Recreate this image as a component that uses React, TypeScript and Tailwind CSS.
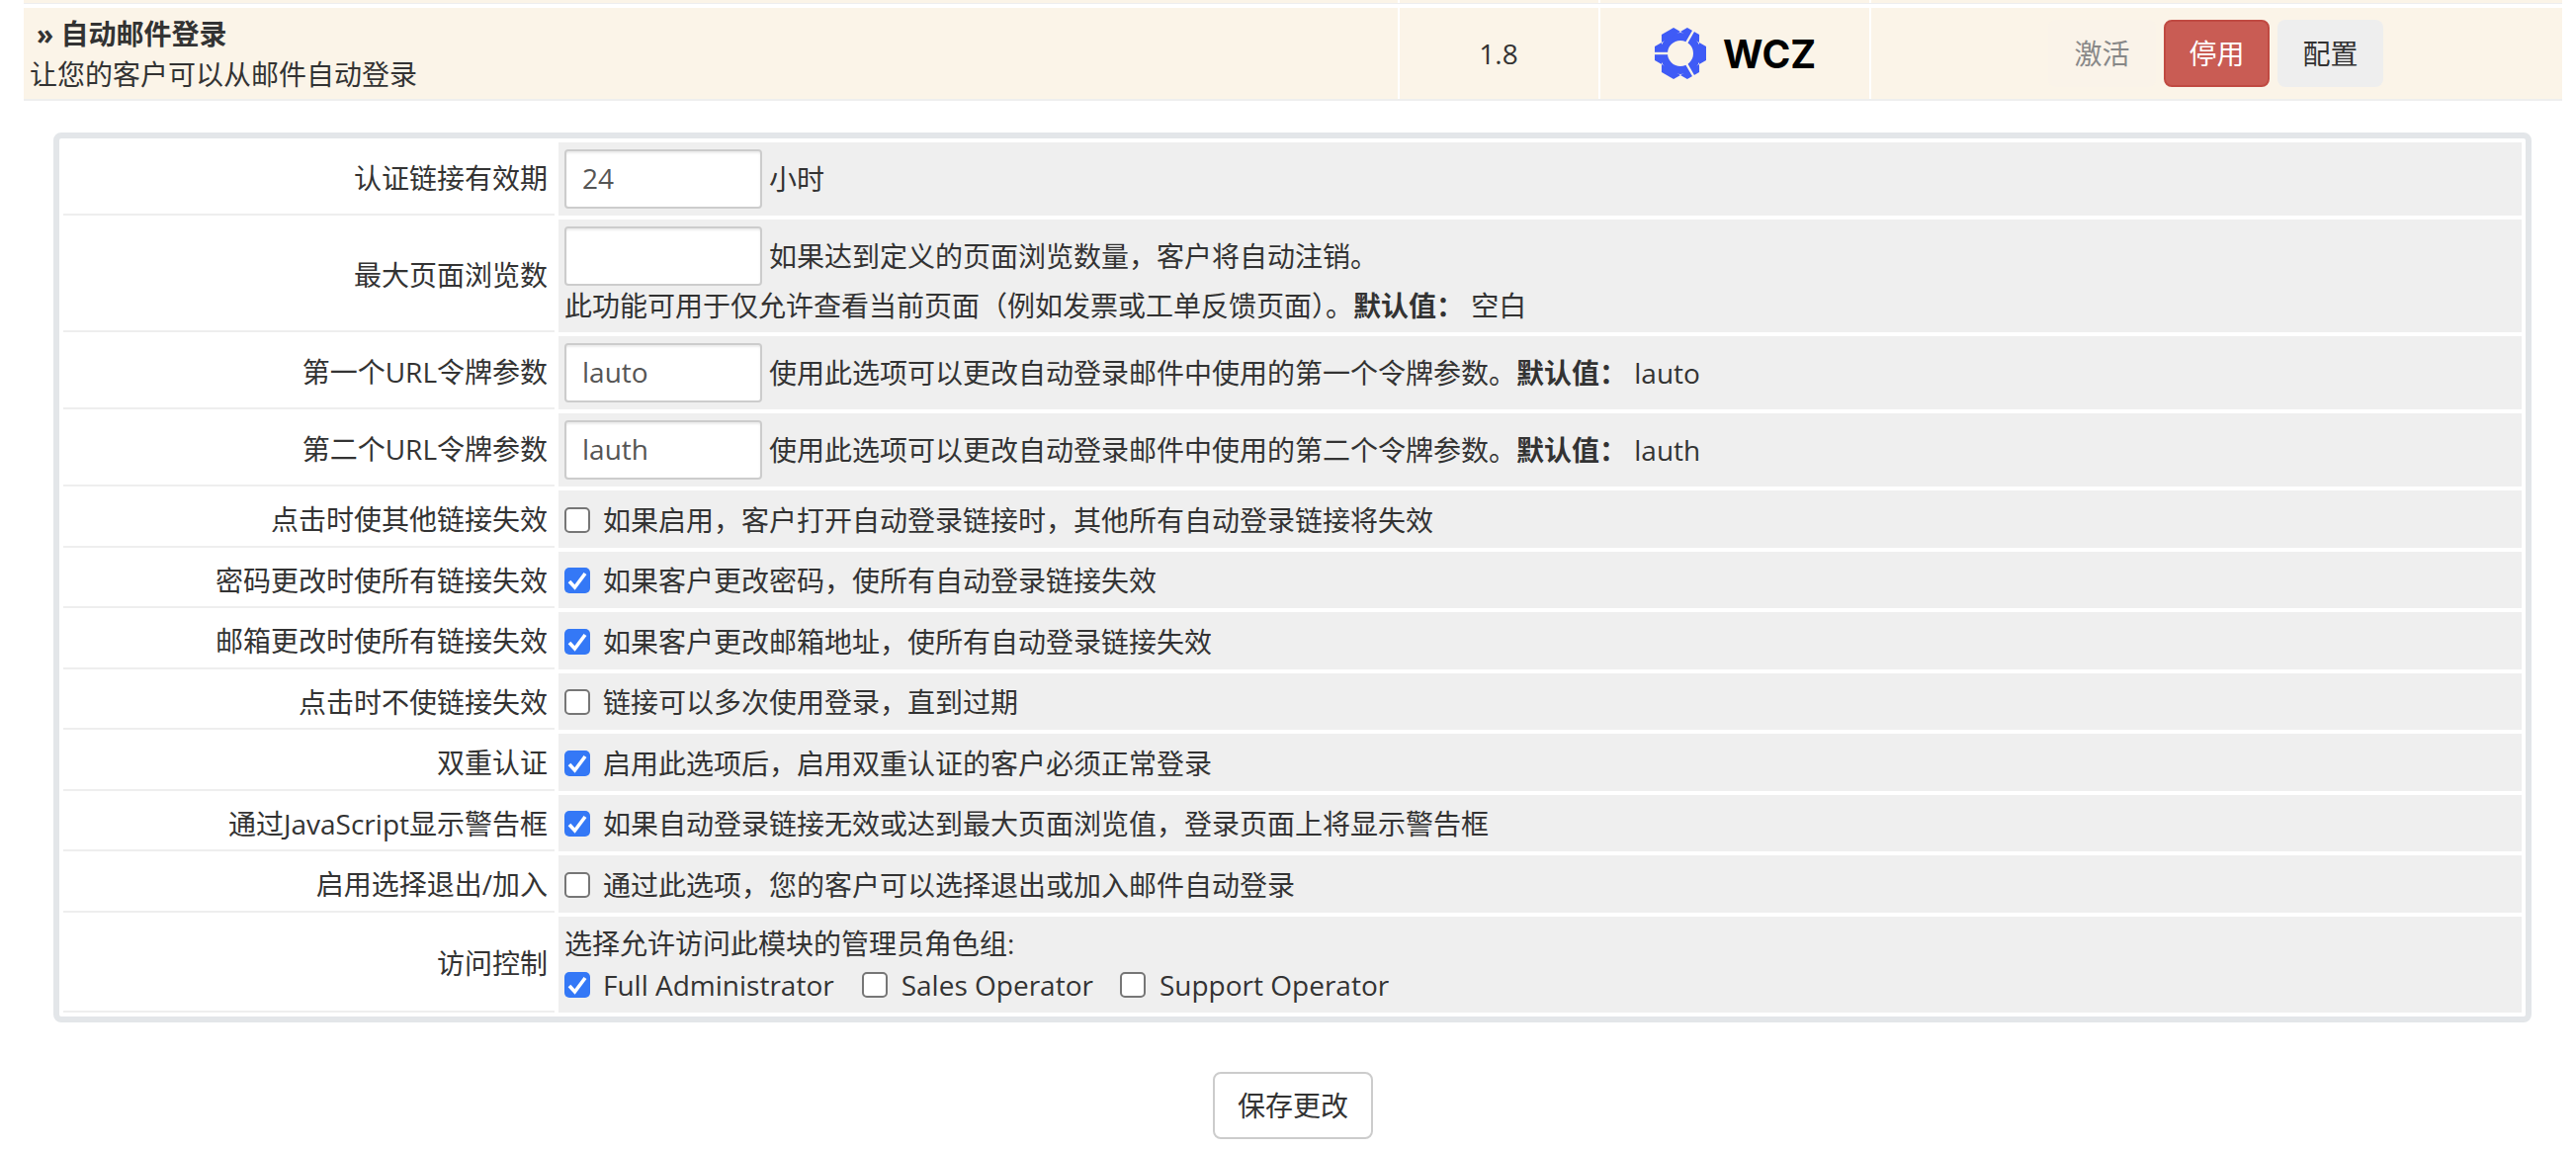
import React from 'react';

const cjk = "font-['Open_Sans','Noto_Sans_CJK_SC',sans-serif]";

const Box = ({ on }: { on?: boolean }) => (
  <span
    className={`inline-flex w-[26px] h-[26px] shrink-0 items-center justify-center rounded-[5px] ${
      on ? 'bg-[#3478f6]' : 'bg-white border-2 border-[#767676]'
    }`}
  >
    {on && (
      <svg width="26" height="26" viewBox="0 0 26 26">
        <path d="M5 14l5.5 6L21 6" fill="none" stroke="white" strokeWidth="3.6" />
      </svg>
    )}
  </span>
);

const Input = ({ value }: { value?: string }) => (
  <input
    readOnly
    value={value ?? ''}
    className="w-[200px] h-[60px] shrink-0 bg-white border-2 border-[#ccc] rounded-[4px] px-[16px] pb-[2px] text-[#555] text-[28px] outline-none shadow-[inset_0_2px_2px_rgba(0,0,0,0.075)]"
  />
);

const Row = ({ label, h, children }: { label: React.ReactNode; h: string; children: React.ReactNode }) => (
  <div className={`flex gap-[4px] ${h}`}>
    <div className="w-[497px] shrink-0 flex items-center justify-end pr-[7px] border-b-2 border-[#eee]">{label}</div>
    <div className="flex-1 bg-[#efefef] px-[6px] flex flex-col justify-center">{children}</div>
  </div>
);

const CheckRow = ({ label, on, text }: { label: string; on?: boolean; text: string }) => (
  <Row label={<span className="mt-[3px]">{label}</span>} h="h-[57.5px]">
    <div className="flex items-center gap-[13px] pt-[2px]">
      <Box on={on} />
      <span>{text}</span>
    </div>
  </Row>
);

const Sep = () => <div className="w-[2px] bg-white" />;

// gear of the vendor logo: ring + six teeth, cut in three segments
const Gear = () => (
  <svg width="54" height="54" viewBox="-27 -27 54 54" className="shrink-0">
    <circle r="17" fill="none" stroke="#3f5bf6" strokeWidth="8" />
    {[0, 60, 120, 180, 240, 300].map((a) => (
      <path key={a} transform={`rotate(${a + 90})`} d="M-11-19-7-26H7L11-19Z" fill="#3f5bf6" />
    ))}
    {[180, -60, 60].map((a) => (
      <path key={a} transform={`rotate(${a})`} d="M12 0H28" stroke="#fbf4e8" strokeWidth="2.4" />
    ))}
  </svg>
);

export default function App() {
  return (
    <div className={`${cjk} bg-white w-[2606px] h-[1162px] overflow-hidden text-[28px] leading-[40px] text-[#333]`}>
      {/* strip of the row above */}
      <div className="ml-[24px] w-[2568px] h-[4px] bg-[#fbf4e8] border-b border-[#eee] flex">
        <div className="w-[1390px]" />
        <Sep />
        <div className="w-[201px]" />
        <Sep />
        <div className="w-[272px]" />
        <Sep />
      </div>

      {/* module row */}
      <div className="mt-[4px] ml-[24px] w-[2568px] h-[94px] bg-[#fbf4e8] border-b-2 border-[#eee] flex">
        <div className="w-[1390px] pl-[6px] flex flex-col justify-center">
          <b className="pl-[7px]">» 自动邮件登录</b>
          <span className="pt-[1px]">让您的客户可以从邮件自动登录</span>
        </div>
        <Sep />
        <div className="w-[201px] pr-[1px] flex items-center justify-center">1.8</div>
        <Sep />
        <div className="w-[272px] pl-[54px] flex items-center gap-[16px]">
          <Gear />
          <span className="font-['Inter',sans-serif] font-bold text-[39px] leading-none text-black">WCZ</span>
        </div>
        <Sep />
        <div className="flex-1 flex items-center pl-[179px] gap-[8px]">
          <span className="w-[109px] h-[68px] rounded-[8px] flex items-center justify-center text-[#888] bg-[#faf3e9]">激活</span>
          <span className="w-[107px] h-[68px] rounded-[8px] flex items-center justify-center text-white bg-[#c95c54] border-2 border-[#c04a42]">停用</span>
          <span className="w-[107px] h-[68px] rounded-[8px] flex items-center justify-center bg-[#eee]">配置</span>
        </div>
      </div>

      {/* config box */}
      <div className="mt-[32px] ml-[54px] w-[2507px] h-[900px] border-[6px] border-[#e3e6e9] rounded-[8px] px-[4px] pt-[4px] flex flex-col gap-[4px]">
        <Row label="认证链接有效期" h="h-[74px]">
          <div className="flex items-center gap-[7px]">
            <Input value="24" />
            <span>小时</span>
          </div>
        </Row>
        <Row label="最大页面浏览数" h="h-[114px]">
          <div className="flex items-center gap-[7px]">
            <Input />
            <span>如果达到定义的页面浏览数量，客户将自动注销。</span>
          </div>
          <div>
            此功能可用于仅允许查看当前页面（例如发票或工单反馈页面）。<b>默认值：</b> 空白
          </div>
        </Row>
        <Row label="第一个URL令牌参数" h="h-[74px]">
          <div className="flex items-center gap-[7px]">
            <Input value="lauto" />
            <span>
              使用此选项可以更改自动登录邮件中使用的第一个令牌参数。<b>默认值：</b> lauto
            </span>
          </div>
        </Row>
        <Row label="第二个URL令牌参数" h="h-[74px]">
          <div className="flex items-center gap-[7px]">
            <Input value="lauth" />
            <span>
              使用此选项可以更改自动登录邮件中使用的第二个令牌参数。<b>默认值：</b> lauth
            </span>
          </div>
        </Row>
        <CheckRow label="点击时使其他链接失效" text="如果启用，客户打开自动登录链接时，其他所有自动登录链接将失效" />
        <CheckRow label="密码更改时使所有链接失效" on text="如果客户更改密码，使所有自动登录链接失效" />
        <CheckRow label="邮箱更改时使所有链接失效" on text="如果客户更改邮箱地址，使所有自动登录链接失效" />
        <CheckRow label="点击时不使链接失效" text="链接可以多次使用登录，直到过期" />
        <CheckRow label="双重认证" on text="启用此选项后，启用双重认证的客户必须正常登录" />
        <CheckRow label="通过JavaScript显示警告框" on text="如果自动登录链接无效或达到最大页面浏览值，登录页面上将显示警告框" />
        <CheckRow label="启用选择退出/加入" text="通过此选项，您的客户可以选择退出或加入邮件自动登录" />
        <Row label="访问控制" h="h-[97px]">
          <div>选择允许访问此模块的管理员角色组:</div>
          <div className="flex items-center pt-[2px]">
            <Box on />
            <span className="ml-[13px] mr-[28px]">Full Administrator</span>
            <Box />
            <span className="ml-[14px] mr-[27px]">Sales Operator</span>
            <Box />
            <span className="ml-[14px]">Support Operator</span>
          </div>
        </Row>
      </div>

      <div className="mt-[50px] flex justify-center pl-[10px]">
        <button className="w-[162px] h-[68px] border-2 border-[#ccc] rounded-[8px] bg-white">保存更改</button>
      </div>
    </div>
  );
}
